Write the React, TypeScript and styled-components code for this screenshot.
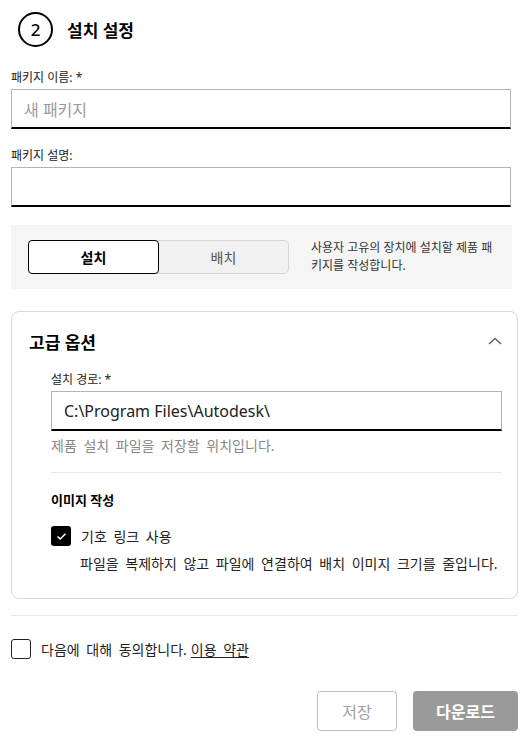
import React from "react";
import styled, { createGlobalStyle } from "styled-components";

const Global = createGlobalStyle`
  html, body { margin: 0; padding: 0; background: #fff; }
  body { font-family: "Noto Sans", "Noto Sans CJK KR", sans-serif; color: #000; }
  * { box-sizing: border-box; }
`;

const Page = styled.div`
  width: 526px;
  padding: 12px 8px 0 11px;
  display: flex;
  flex-direction: column;
`;

const Header = styled.div`
  display: flex;
  align-items: center;
  gap: 14px;
  padding-left: 7px;
`;

const StepCircle = styled.div`
  width: 35px;
  height: 35px;
  border: 2px solid #000;
  border-radius: 50%;
  display: flex;
  align-items: center;
  justify-content: center;
  font-size: 17px;
  font-weight: 500;
`;

const Title = styled.div`
  font-size: 17px;
  font-weight: 700;
`;

const Label = styled.div<{ $top: number }>`
  font-size: 12px;
  line-height: 16px;
  color: #222;
  margin-top: ${(p) => p.$top}px;
  margin-bottom: 3px;
`;

const Input = styled.div<{ $placeholder?: boolean; $inset?: number }>`
  height: 40px;
  margin-right: ${(p) => p.$inset ?? 7}px;
  border: 1px solid #b3b3b3;
  border-bottom: 2px solid #000;
  padding: 0 12px;
  display: flex;
  align-items: center;
  font-size: 16px;
  color: ${(p) => (p.$placeholder ? "#9a9a9a" : "#222")};
`;

const ModePanel = styled.div`
  margin-top: 18px;
  margin-right: 6px;
  background: #f5f5f5;
  height: 64px;
  padding: 0 18px 0 17px;
  display: flex;
  align-items: center;
  gap: 22px;
`;

const Toggle = styled.div`
  display: flex;
  width: 261px;
  height: 34px;
  flex-shrink: 0;
  background: #f1f1f1;
  border: 1px solid #d6d6d6;
  border-radius: 5px;
`;

const ToggleItem = styled.div<{ $active?: boolean }>`
  flex: 1;
  display: flex;
  align-items: center;
  justify-content: center;
  font-size: 14px;
  font-weight: ${(p) => (p.$active ? 700 : 400)};
  color: ${(p) => (p.$active ? "#000" : "#555")};
  background: ${(p) => (p.$active ? "#fff" : "transparent")};
  border: ${(p) => (p.$active ? "1px solid #000" : "none")};
  border-radius: 4px;
  margin: ${(p) => (p.$active ? "-1px 0 -1px -1px" : "0")};
`;

const ModeText = styled.div`
  font-size: 12px;
  line-height: 18px;
  color: #333;
`;

const Card = styled.div`
  margin-top: 22px;
  border: 1px solid #d9d9d9;
  border-radius: 8px;
  padding: 17px 15px 25px 17px;
`;

const CardHead = styled.div`
  display: flex;
  align-items: center;
  justify-content: space-between;
  height: 24px;
`;

const CardTitle = styled.div`
  font-size: 17px;
  font-weight: 700;
`;

const Chevron = styled.svg`
  margin-right: -1px;
`;

const CardBody = styled.div`
  padding-left: 22px;
  display: flex;
  flex-direction: column;
`;

const Helper = styled.div`
  margin-top: 5px;
  font-size: 14px;
  line-height: 20px;
  word-spacing: 3px;
  color: #888;
`;

const Divider = styled.div<{ $top: number }>`
  height: 1px;
  background: #e8e8e8;
  margin-top: ${(p) => p.$top}px;
`;

const SubTitle = styled.div`
  margin-top: 17px;
  font-size: 13px;
  font-weight: 700;
  line-height: 20px;
`;

const CheckRow = styled.div<{ $top: number }>`
  display: flex;
  align-items: center;
  gap: 10px;
  margin-top: ${(p) => p.$top}px;
  font-size: 14px;
  word-spacing: 3px;
  color: #222;
`;

const Box = styled.div<{ $checked?: boolean }>`
  width: 20px;
  height: 20px;
  border-radius: 3px;
  flex-shrink: 0;
  display: flex;
  align-items: center;
  justify-content: center;
  background: ${(p) => (p.$checked ? "#000" : "#fff")};
  border: ${(p) => (p.$checked ? "none" : "1.5px solid #222")};
`;

const CheckDesc = styled.div`
  margin-top: 9px;
  padding-left: 29px;
  font-size: 14px;
  line-height: 18px;
  word-spacing: 3px;
  color: #222;
`;

const Link = styled.span`
  text-decoration: underline;
  text-underline-offset: 2px;
  margin-left: 4px;
`;

const Actions = styled.div`
  margin-top: 32px;
  display: flex;
  justify-content: flex-end;
  gap: 16px;
`;

const Button = styled.div<{ $primary?: boolean }>`
  height: 40px;
  width: ${(p) => (p.$primary ? 105 : 80)}px;
  border-radius: 4px;
  display: flex;
  align-items: center;
  justify-content: center;
  font-size: 16px;
  font-weight: ${(p) => (p.$primary ? 700 : 400)};
  color: ${(p) => (p.$primary ? "#fff" : "#a0a0a0")};
  background: ${(p) => (p.$primary ? "#9a9a9a" : "#fff")};
  border: ${(p) => (p.$primary ? "none" : "1px solid #bdbdbd")};
`;

export default function App() {
  return (
    <>
      <Global />
      <Page>
        <Header>
          <StepCircle>2</StepCircle>
          <Title>설치 설정</Title>
        </Header>

        <Label $top={23}>패키지 이름: *</Label>
        <Input $placeholder>새 패키지</Input>

        <Label $top={19}>패키지 설명:</Label>
        <Input />

        <ModePanel>
          <Toggle>
            <ToggleItem $active>설치</ToggleItem>
            <ToggleItem>배치</ToggleItem>
          </Toggle>
          <ModeText>사용자 고유의 장치에 설치할 제품 패키지를 작성합니다.</ModeText>
        </ModePanel>

        <Card>
          <CardHead>
            <CardTitle>고급 옵션</CardTitle>
            <Chevron width="16" height="10" viewBox="0 0 16 10">
              <path d="M2 8 L8 2.5 L14 8" fill="none" stroke="#666" strokeWidth="1.6" />
            </Chevron>
          </CardHead>
          <CardBody>
            <Label $top={19}>설치 경로: *</Label>
            <Input $inset={0}>C:\Program Files\Autodesk\</Input>
            <Helper>제품 설치 파일을 저장할 위치입니다.</Helper>
            <Divider $top={16} />
            <SubTitle>이미지 작성</SubTitle>
            <CheckRow $top={16}>
              <Box $checked>
                <svg width="11" height="9" viewBox="0 0 11 9">
                  <path d="M1.5 4.5 L4.2 7 L9.5 1.8" fill="none" stroke="#fff" strokeWidth="1.6" />
                </svg>
              </Box>
              기호 링크 사용
            </CheckRow>
            <CheckDesc>파일을 복제하지 않고 파일에 연결하여 배치 이미지 크기를 줄입니다.</CheckDesc>
          </CardBody>
        </Card>

        <Divider $top={16} />

        <CheckRow $top={23}>
          <Box />
          <span>
            다음에 대해 동의합니다.<Link>이용 약관</Link>
          </span>
        </CheckRow>

        <Actions>
          <Button>저장</Button>
          <Button $primary>다운로드</Button>
        </Actions>
      </Page>
    </>
  );
}
